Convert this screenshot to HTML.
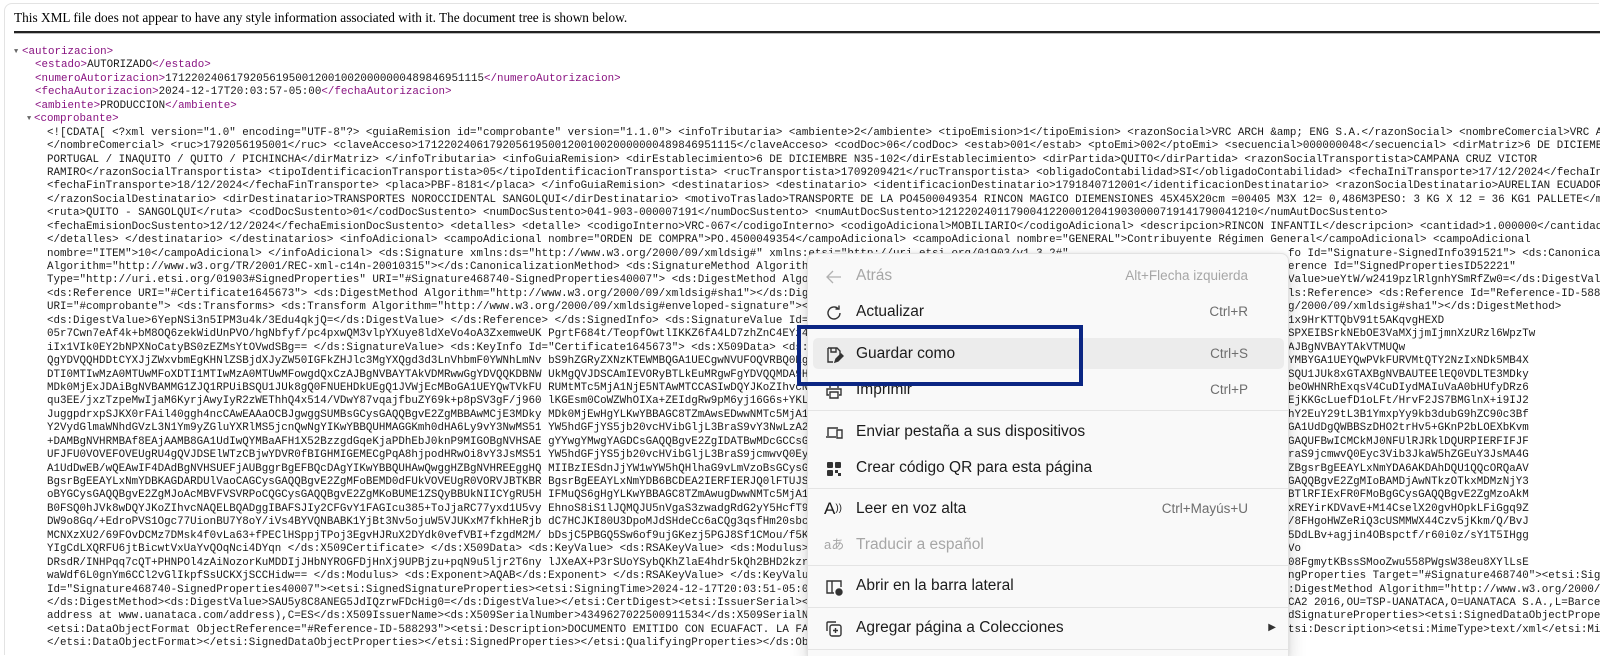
<!DOCTYPE html>
<html><head><meta charset="utf-8">
<style>
html,body{margin:0;padding:0;background:#fff;width:1600px;height:656px;overflow:hidden;position:relative}
.frame{position:absolute;left:4px;top:3px;width:1594px;height:651px;border:1px solid #e3e3e3;border-bottom:none;border-right:none;border-radius:8px 0 0 0}
.hdr{position:absolute;left:14px;top:10px;font-family:"Liberation Serif",serif;font-size:13.3px;color:#000;white-space:nowrap}
.hr{position:absolute;left:14px;right:0;top:31px;height:2px;background:#222;border-bottom:1px solid #bbb}
.code{position:absolute;left:0;top:46px;width:1600px;height:610px;overflow:hidden;font-family:"Liberation Mono",monospace;font-size:10.85px;color:#1a1a1a}
.l{position:relative;height:13.45px;line-height:13.45px;white-space:pre;overflow:hidden;width:1600px}
.t{color:#881280}
.a{position:absolute;font-size:7px;color:#666;top:0}
.r{position:absolute;left:1288px;top:0}
.menu{position:absolute;left:807px;top:253px;width:480px;height:403px;overflow:hidden;background:#f9f9f9;border:1px solid #e2e2e2;border-bottom:none;border-radius:8px 8px 0 0;box-shadow:0 8px 18px rgba(0,0,0,.16),0 0 4px rgba(0,0,0,.08);font-family:"Liberation Sans",sans-serif}
.it{position:absolute;left:0;width:480px;height:30px;line-height:30px;font-size:15.5px;color:#1b1b1b}
.it .tx{position:absolute;left:48px}
.it .sc{position:absolute;right:40px;font-size:13.5px;color:#6e6e6e}
.it svg{position:absolute;left:16px;top:6px}
.dis{color:#a6a6a6!important}
.sep{position:absolute;left:0;width:480px;height:1px;background:#e4e4e4}
.hl{position:absolute;left:5px;top:84px;width:471px;height:31px;background:#ececec;border-radius:5px}
.box{position:absolute;left:797px;top:325px;width:278px;height:53px;border:4px solid #0b2683}
</style></head><body>
<div class="frame"></div>
<div class="hdr">This XML file does not appear to have any style information associated with it. The document tree is shown below.</div>
<div class="hr"></div>
<div class="code">
<div class="l"><span class="a" style="left:14px">▼</span><span style="position:absolute;left:22px"><span class="t">&lt;autorizacion&gt;</span></span></div>
<div class="l"><span style="position:absolute;left:35px"><span class="t">&lt;estado&gt;</span>AUTORIZADO<span class="t">&lt;/estado&gt;</span></span></div>
<div class="l"><span style="position:absolute;left:35px"><span class="t">&lt;numeroAutorizacion&gt;</span>1712202406179205619500120010020000000489846951115<span class="t">&lt;/numeroAutorizacion&gt;</span></span></div>
<div class="l"><span style="position:absolute;left:35px"><span class="t">&lt;fechaAutorizacion&gt;</span>2024-12-17T20:03:57-05:00<span class="t">&lt;/fechaAutorizacion&gt;</span></span></div>
<div class="l"><span style="position:absolute;left:35px"><span class="t">&lt;ambiente&gt;</span>PRODUCCIÓN<span class="t">&lt;/ambiente&gt;</span></span></div>
<div class="l"><span class="a" style="left:27px">▼</span><span style="position:absolute;left:34px"><span class="t">&lt;comprobante&gt;</span></span></div>
<div class="l"><span style="position:absolute;left:47px">&lt;![CDATA[ &lt;?xml version="1.0" encoding="UTF-8"?&gt; &lt;guiaRemision id="comprobante" version="1.1.0"&gt; &lt;infoTributaria&gt; &lt;ambiente&gt;2&lt;/ambiente&gt; &lt;tipoEmision&gt;1&lt;/tipoEmision&gt; &lt;razonSocial&gt;VRC ARCH &amp;amp; ENG S.A.&lt;/razonSocial&gt; &lt;nombreComercial&gt;VRC ARCH &amp;amp; ENG S.A.</span></div>
<div class="l"><span style="position:absolute;left:47px">&lt;/nombreComercial&gt; &lt;ruc&gt;1792056195001&lt;/ruc&gt; &lt;claveAcceso&gt;1712202406179205619500120010020000000489846951115&lt;/claveAcceso&gt; &lt;codDoc&gt;06&lt;/codDoc&gt; &lt;estab&gt;001&lt;/estab&gt; &lt;ptoEmi&gt;002&lt;/ptoEmi&gt; &lt;secuencial&gt;000000048&lt;/secuencial&gt; &lt;dirMatriz&gt;6 DE DICIEMBRE N35-102 Y</span></div>
<div class="l"><span style="position:absolute;left:47px">PORTUGAL / IÑAQUITO / QUITO / PICHINCHA&lt;/dirMatriz&gt; &lt;/infoTributaria&gt; &lt;infoGuiaRemision&gt; &lt;dirEstablecimiento&gt;6 DE DICIEMBRE N35-102&lt;/dirEstablecimiento&gt; &lt;dirPartida&gt;QUITO&lt;/dirPartida&gt; &lt;razonSocialTransportista&gt;CAMPAÑA CRUZ VICTOR</span></div>
<div class="l"><span style="position:absolute;left:47px">RAMIRO&lt;/razonSocialTransportista&gt; &lt;tipoIdentificacionTransportista&gt;05&lt;/tipoIdentificacionTransportista&gt; &lt;rucTransportista&gt;1709209421&lt;/rucTransportista&gt; &lt;obligadoContabilidad&gt;SI&lt;/obligadoContabilidad&gt; &lt;fechaIniTransporte&gt;17/12/2024&lt;/fechaIniTransporte&gt;</span></div>
<div class="l"><span style="position:absolute;left:47px">&lt;fechaFinTransporte&gt;18/12/2024&lt;/fechaFinTransporte&gt; &lt;placa&gt;PBF-8181&lt;/placa&gt; &lt;/infoGuiaRemision&gt; &lt;destinatarios&gt; &lt;destinatario&gt; &lt;identificacionDestinatario&gt;1791840712001&lt;/identificacionDestinatario&gt; &lt;razonSocialDestinatario&gt;AURELIAN ECUADOR S.A.</span></div>
<div class="l"><span style="position:absolute;left:47px">&lt;/razonSocialDestinatario&gt; &lt;dirDestinatario&gt;TRANSPORTES NOROCCIDENTAL SANGOLQUI&lt;/dirDestinatario&gt; &lt;motivoTraslado&gt;TRANSPORTE DE LA PO4500049354 RINCON MAGICO DIEMENSIONES 45X45X20cm =00405 M3X 12= 0,486M3PESO: 3 KG X 12 = 36 KG1 PALLETE&lt;/motivoTraslado&gt;</span></div>
<div class="l"><span style="position:absolute;left:47px">&lt;ruta&gt;QUITO - SANGOLQUI&lt;/ruta&gt; &lt;codDocSustento&gt;01&lt;/codDocSustento&gt; &lt;numDocSustento&gt;041-903-000007191&lt;/numDocSustento&gt; &lt;numAutDocSustento&gt;1212202401179004122000120419030000719141790041210&lt;/numAutDocSustento&gt;</span></div>
<div class="l"><span style="position:absolute;left:47px">&lt;fechaEmisionDocSustento&gt;12/12/2024&lt;/fechaEmisionDocSustento&gt; &lt;detalles&gt; &lt;detalle&gt; &lt;codigoInterno&gt;VRC-067&lt;/codigoInterno&gt; &lt;codigoAdicional&gt;MOBILIARIO&lt;/codigoAdicional&gt; &lt;descripcion&gt;RINCON INFANTIL&lt;/descripcion&gt; &lt;cantidad&gt;1.000000&lt;/cantidad&gt; &lt;/detalle&gt;</span></div>
<div class="l"><span style="position:absolute;left:47px">&lt;/detalles&gt; &lt;/destinatario&gt; &lt;/destinatarios&gt; &lt;infoAdicional&gt; &lt;campoAdicional nombre="ORDEN DE COMPRA"&gt;PO.4500049354&lt;/campoAdicional&gt; &lt;campoAdicional nombre="GENERAL"&gt;Contribuyente Régimen General&lt;/campoAdicional&gt; &lt;campoAdicional</span></div>
<div class="l"><span style="position:absolute;left:47px">nombre="ITEM"&gt;10&lt;/campoAdicional&gt; &lt;/infoAdicional&gt; &lt;ds:Signature xmlns:ds="http://www.w3.org/2000/09/xmldsig#" xmlns:etsi="http://uri.etsi.org/01903/v1.3.2#"</span><span class="r">fo Id="Signature-SignedInfo391521"&gt; &lt;ds:CanonicalizationMethod</span></div>
<div class="l"><span style="position:absolute;left:47px">Algorithm="http://www.w3.org/TR/2001/REC-xml-c14n-20010315"&gt;&lt;/ds:CanonicalizationMethod&gt; &lt;ds:SignatureMethod Algorithm="http</span><span class="r">erence Id="SignedPropertiesID52221"</span></div>
<div class="l"><span style="position:absolute;left:47px">Type="http://uri.etsi.org/01903#SignedProperties" URI="#Signature468740-SignedProperties40007"&gt; &lt;ds:DigestMethod Algorithm</span><span class="r">Value&gt;ueYtW/w2419pzlRlgnhYSmRfZw0=&lt;/ds:DigestValue&gt;</span></div>
<div class="l"><span style="position:absolute;left:47px">&lt;ds:Reference URI="#Certificate1645673"&gt; &lt;ds:DigestMethod Algorithm="http://www.w3.org/2000/09/xmldsig#sha1"&gt;&lt;/ds:DigestMethod&gt;</span><span class="r">ls:Reference&gt; &lt;ds:Reference Id="Reference-ID-588293"</span></div>
<div class="l"><span style="position:absolute;left:47px">URI="#comprobante"&gt; &lt;ds:Transforms&gt; &lt;ds:Transform Algorithm="http://www.w3.org/2000/09/xmldsig#enveloped-signature"&gt;&lt;/ds</span><span class="r">g/2000/09/xmldsig#sha1"&gt;&lt;/ds:DigestMethod&gt;</span></div>
<div class="l"><span style="position:absolute;left:47px">&lt;ds:DigestValue&gt;6YepNSi3n5IPM3u4k/3Edu4qkjQ=&lt;/ds:DigestValue&gt; &lt;/ds:Reference&gt; &lt;/ds:SignedInfo&gt; &lt;ds:SignatureValue Id="Si</span><span class="r">1x9HrKTTQbV91t5AKqvgHEXD</span></div>
<div class="l"><span style="position:absolute;left:47px">05r7Cwn7eAf4k+bM8OQ6zekWidUnPVO/hgNbfyf/pc4pxwQM3vlpYXuye8ldXeVo4oA3ZxemweUK PgrtF684t/TeopfOwtlIKKZ6fA4LD7zhZnC4EYz4R</span><span class="r">SPXEIBSrkNEbOE3VaMXjjmIjmnXzURzl6WpzTw</span></div>
<div class="l"><span style="position:absolute;left:47px">iIx1VIk0EY2bNPXNoCatyBS0zEZMsYtOVwdSBg== &lt;/ds:SignatureValue&gt; &lt;ds:KeyInfo Id="Certificate1645673"&gt; &lt;ds:X509Data&gt; &lt;ds:X</span><span class="r">AJBgNVBAYTAkVTMUQw</span></div>
<div class="l"><span style="position:absolute;left:47px">QgYDVQQHDDtCYXJjZWxvbmEgKHNlZSBjdXJyZW50IGFkZHJlc3MgYXQgd3d3LnVhbmF0YWNhLmNv bS9hZGRyZXNzKTEWMBQGA1UECgwNVUFOQVRBQ0EgU</span><span class="r">YMBYGA1UEYQwPVkFURVMtQTY2NzIxNDk5MB4X</span></div>
<div class="l"><span style="position:absolute;left:47px">DTI0MTIwMzA0MTUwMFoXDTI1MTIwMzA0MTUwMFowgdQxCzAJBgNVBAYTAkVDMRwwGgYDVQQKDBNW UkMgQVJDSCAmIEVORyBTLkEuMRgwFgYDVQQMDA9HR</span><span class="r">SQU1JUk8xGTAXBgNVBAUTEElEQ0VDLTE3MDky</span></div>
<div class="l"><span style="position:absolute;left:47px">MDk0MjExJDAiBgNVBAMMG1ZJQ1RPUiBSQU1JUk8gQ0FNUEHDkUEgQ1JVWjEcMBoGA1UEYQwTVkFU RUMtMTc5MjA1NjE5NTAwMTCCASIwDQYJKoZIhvcNA</span><span class="r">beOWHNRhExqsV4CuDIydMAIuVaA0bHUfyDRz6</span></div>
<div class="l"><span style="position:absolute;left:47px">qu3EE/jxzTzpeMwIjaM6KyrjAwyIyR2zWEThhQ4x514/VDwY87vqajfbuZY69k+p8pSV3gF/j960 lKGEsm0CoWZWhOIXa+ZEIdgRw9pM6yj16G6s+YKLK</span><span class="r">EjKKGcLuefD1oLFt/HrvF2JS7BMGlnX+i9IJ2</span></div>
<div class="l"><span style="position:absolute;left:47px">JuggpdrxpSJKX0rFAil40ggh4ncCAwEAAaOCBJgwggSUMBsGCysGAQQBgvE2ZgMBBAwMCjE3MDky MDk0MjEwHgYLKwYBBAGC8TZmAwsEDwwNMTc5MjA1N</span><span class="r">hY2EuY29tL3B1YmxpYy9kb3dubG9hZC90c3Bf</span></div>
<div class="l"><span style="position:absolute;left:47px">Y2VydGlmaWNhdGVzL3N1Ym9yZGluYXRlMS5jcnQwNgYIKwYBBQUHMAGGKmh0dHA6Ly9vY3NwMS51 YW5hdGFjYS5jb20vcHVibGljL3BraS9vY3NwLzA2B</span><span class="r">GA1UdDgQWBBSzDHO2trHv5+GKnP2bLOEXbKvm</span></div>
<div class="l"><span style="position:absolute;left:47px">+DAMBgNVHRMBAf8EAjAAMB8GA1UdIwQYMBaAFH1X52BzzgdGqeKjaPDhEbJ0knP9MIGOBgNVHSAE gYYwgYMwgYAGDCsGAQQBgvE2ZgIDATBwMDcGCCsGA</span><span class="r">GAQUFBwICMCkMJ0NFUlRJRklDQURPIERFIFJF</span></div>
<div class="l"><span style="position:absolute;left:47px">UFJFU0VOVEFOVEUgRU4gQVJDSElWTzCBjwYDVR0fBIGHMIGEMECgPqA8hjpodHRwOi8vY3JsMS51 YW5hdGFjYS5jb20vcHVibGljL3BraS9jcmwvQ0Eyc</span><span class="r">raS9jcmwvQ0Eyc3Vib3JkaW5hZGEuY3JsMA4G</span></div>
<div class="l"><span style="position:absolute;left:47px">A1UdDwEB/wQEAwIF4DAdBgNVHSUEFjAUBggrBgEFBQcDAgYIKwYBBQUHAwQwggHZBgNVHREEggHQ MIIBzIESdnJjYW1wYW5hQHlhaG9vLmVzoBsGCysGA</span><span class="r">ZBgsrBgEEAYLxNmYDA6AKDAhDQU1QQcORQaAV</span></div>
<div class="l"><span style="position:absolute;left:47px">BgsrBgEEAYLxNmYDBKAGDARDUlVaoCAGCysGAQQBgvE2ZgMFoBEMD0dFUkVOVEUgR0VORVJBTKBR BgsrBgEEAYLxNmYDB6BCDEA2IERFIERJQ0lFTUJSR</span><span class="r">GAQQBgvE2ZgMIoBAMDjAwNTkzOTkxMDMzNjY3</span></div>
<div class="l"><span style="position:absolute;left:47px">oBYGCysGAQQBgvE2ZgMJoAcMBVFVSVRPoCQGCysGAQQBgvE2ZgMKoBUME1ZSQyBBUkNIICYgRU5H IFMuQS6gHgYLKwYBBAGC8TZmAwugDwwNMTc5MjA1N</span><span class="r">BTlRFIExFR0FMoBgGCysGAQQBgvE2ZgMzoAkM</span></div>
<div class="l"><span style="position:absolute;left:47px">B0FSQ0hJVk8wDQYJKoZIhvcNAQELBQADggIBAFSJIy2CFGvY1FAGIcu385+ToJjaRC77yxd1U5vy EhnoS8iS1lJQMQJU5nVgaS3zwadgRdG2yY5HcfT9i</span><span class="r">xREYirKDVavE+M14CselX20gvHOpkLFiGgq9Z</span></div>
<div class="l"><span style="position:absolute;left:47px">DW9o8Gq/+EdroPVS1Ogc77UionBU7Y8oY/iVs4BYVQNBABK1YjBt3Nv5ojuW5VJUKxM7fkhHeRjb dC7HCJKI80U3DpoMJdSHdeCc6aCQg3qsfHm20sbcb</span><span class="r">/8FHgoHWZeRiQ3cUSMMWX44Czv5jKkm/Q/BvJ</span></div>
<div class="l"><span style="position:absolute;left:47px">MCNXzXU2/69FOvDCMz7DMsk4f0vLa63+fPEClHSppjTPoj3EgvHJRuX2DYdk0vefVBI+fzgdM2M/ bDsjC5PBGQ5Sw6of9ujGKezj5PGJ8Sf1CMou/f5KE</span><span class="r">5DdLBv+agjin4OBspctf/r60i0z/sY1T5IHgg</span></div>
<div class="l"><span style="position:absolute;left:47px">YIgCdLXQRFU6jtBicwtVxUaYvQOqNci4DYqn &lt;/ds:X509Certificate&gt; &lt;/ds:X509Data&gt; &lt;ds:KeyValue&gt; &lt;ds:RSAKeyValue&gt; &lt;ds:Modulus&gt;</span><span class="r">Vo</span></div>
<div class="l"><span style="position:absolute;left:47px">DRsdR/INHPqq7cQT+PHNPOl4zAiNozorKuMDDIjJHbNYROGFDjHnXj9UPBjzu+pqN9u5ljr2T6ny lJXeAX+P3rSUoYSybQKhZlaE4hdr5kQh2BHD2kzrK</span><span class="r">08FgmytKBssSMooZwu558PWgsW38eu8XYlLsE</span></div>
<div class="l"><span style="position:absolute;left:47px">waWdf6L0gnYm6CCl2vGlIkpfSsUCKXjSCCHidw== &lt;/ds:Modulus&gt; &lt;ds:Exponent&gt;AQAB&lt;/ds:Exponent&gt; &lt;/ds:RSAKeyValue&gt; &lt;/ds:KeyValue&gt;</span><span class="r">ngProperties Target="#Signature468740"&gt;&lt;etsi:SignedProperties</span></div>
<div class="l"><span style="position:absolute;left:47px">Id="Signature468740-SignedProperties40007"&gt;&lt;etsi:SignedSignatureProperties&gt;&lt;etsi:SigningTime&gt;2024-12-17T20:03:51-05:00&lt;/etsi:</span><span class="r">:DigestMethod Algorithm="http://www.w3.org/2000/09/xmldsig#sha1"</span></div>
<div class="l"><span style="position:absolute;left:47px">&lt;/ds:DigestMethod&gt;&lt;ds:DigestValue&gt;SAU5y8C8ANEG5JdIQzrwFDcHig0=&lt;/ds:DigestValue&gt;&lt;/etsi:CertDigest&gt;&lt;etsi:IssuerSerial&gt;&lt;ds:X5</span><span class="r">CA2 2016,OU=TSP-UANATACA,O=UANATACA S.A.,L=Barcelona</span></div>
<div class="l"><span style="position:absolute;left:47px">address at www.uanataca.com/address),C=ES&lt;/ds:X509IssuerName&gt;&lt;ds:X509SerialNumber&gt;4349627022500911534&lt;/ds:X509SerialNumber&gt;</span><span class="r">dSignatureProperties&gt;&lt;etsi:SignedDataObjectProperties&gt;</span></div>
<div class="l"><span style="position:absolute;left:47px">&lt;etsi:DataObjectFormat ObjectReference="#Reference-ID-588293"&gt;&lt;etsi:Description&gt;DOCUMENTO EMITIDO CON ECUAFACT. LA FACTURA</span><span class="r">tsi:Description&gt;&lt;etsi:MimeType&gt;text/xml&lt;/etsi:MimeType&gt;</span></div>
<div class="l"><span style="position:absolute;left:47px">&lt;/etsi:DataObjectFormat&gt;&lt;/etsi:SignedDataObjectProperties&gt;&lt;/etsi:SignedProperties&gt;&lt;/etsi:QualifyingProperties&gt;&lt;/ds:Obj</span></div>
</div>

<div class="menu">
  <div class="hl"></div>
  <div class="it" style="top:7px"><svg width="20" height="20" viewBox="0 0 20 20" fill="none" stroke="#b0b0b0" stroke-width="1.3"><path d="M17 10H3M9 4L3 10l6 6"/></svg><span class="tx dis">Atrás</span><span class="sc dis">Alt+Flecha izquierda</span></div>
  <div class="it" style="top:43px"><svg width="20" height="20" viewBox="0 0 20 20" fill="none" stroke="#333" stroke-width="1.4"><path d="M16 10a6 6 0 1 1-2-4.5"/><path d="M15 2.5v3.5h-3.5"/></svg><span class="tx">Actualizar</span><span class="sc">Ctrl+R</span></div>
  <div class="it" style="top:85px"><svg width="20" height="20" viewBox="0 0 20 20" fill="none" stroke="#333" stroke-width="1.4"><path d="M4 3h9l3 3v4M4 3v14h5M7 3v4h5V3"/><path d="M11 17l1-3 5-5 2 2-5 5z" fill="#333"/></svg><span class="tx">Guardar como</span><span class="sc">Ctrl+S</span></div>
  <div class="it" style="top:121px"><svg width="20" height="20" viewBox="0 0 20 20" fill="none" stroke="#333" stroke-width="1.4"><path d="M6 7V3h8v4M5 14H3V8h14v6h-2M6 11h8v6H6z"/></svg><span class="tx">Imprimir</span><span class="sc">Ctrl+P</span></div>
  <div class="sep" style="top:156px"></div>
  <div class="it" style="top:163px"><svg width="20" height="20" viewBox="0 0 20 20" fill="none" stroke="#333" stroke-width="1.4"><path d="M4 13V5h10M2 14h10M13 7h5v8h-5z"/></svg><span class="tx">Enviar pestaña a sus dispositivos</span></div>
  <div class="it" style="top:199px"><svg width="20" height="20" viewBox="0 0 20 20" fill="#333"><rect x="3" y="3" width="6" height="6" rx="1"/><rect x="11" y="3" width="6" height="6" rx="1"/><rect x="3" y="11" width="6" height="6" rx="1"/><rect x="11" y="11" width="3" height="3"/><rect x="14" y="14" width="3" height="3"/></svg><span class="tx">Crear código QR para esta página</span></div>
  <div class="sep" style="top:234px"></div>
  <div class="it" style="top:240px"><span style="position:absolute;left:16px;font-size:17px">A<span style="font-size:10px;vertical-align:top">))</span></span><span class="tx">Leer en voz alta</span><span class="sc">Ctrl+Mayús+U</span></div>
  <div class="it" style="top:276px"><span class="dis" style="position:absolute;left:16px;font-size:13px">aあ</span><span class="tx dis">Traducir a español</span></div>
  <div class="sep" style="top:311px"></div>
  <div class="it" style="top:317px"><svg width="20" height="20" viewBox="0 0 20 20" fill="none" stroke="#333" stroke-width="1.4"><path d="M10 16H3V4h14v6M8 4v12"/><circle cx="15" cy="15" r="3" fill="#333"/></svg><span class="tx">Abrir en la barra lateral</span></div>
  <div class="sep" style="top:353px"></div>
  <div class="it" style="top:359px"><svg width="20" height="20" viewBox="0 0 20 20" fill="none" stroke="#333" stroke-width="1.4"><path d="M3 12V4a1 1 0 0 1 1-1h8"/><rect x="6" y="6" width="11" height="11" rx="2"/><path d="M11.5 9v5M9 11.5h5"/></svg><span class="tx">Agregar página a Colecciones</span><span style="position:absolute;right:12px;font-size:10px;color:#333">▶</span></div>
  <div class="sep" style="top:395px"></div>
</div>
<div class="box"></div>
</body></html>
